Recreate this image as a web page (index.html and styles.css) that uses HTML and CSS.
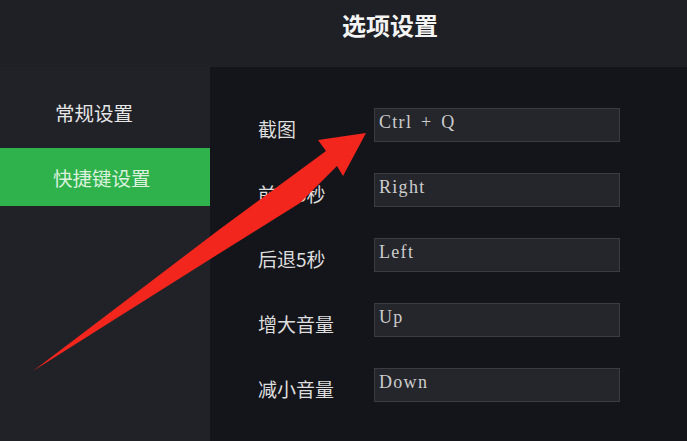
FILE: index.html
```html
<!DOCTYPE html>
<html lang="zh-CN">
<head>
<meta charset="utf-8">
<title>选项设置</title>
<link rel="stylesheet" href="styles.css">
</head>
<body>
<div class="app">
  <header class="header"><h1 class="title">选项设置</h1></header>
  <div class="main">
    <nav class="sidebar">
      <div class="nav-item">常规设置</div>
      <div class="nav-item active">快捷键设置</div>
    </nav>
    <section class="panel">
      <div class="row"><span class="label">截图</span><div class="field">Ctrl + Q</div></div>
      <div class="row"><span class="label">前进5秒</span><div class="field">Right</div></div>
      <div class="row"><span class="label">后退5秒</span><div class="field">Left</div></div>
      <div class="row"><span class="label">增大音量</span><div class="field">Up</div></div>
      <div class="row"><span class="label">减小音量</span><div class="field">Down</div></div>
    </section>
  </div>
  <svg class="arrow" viewBox="0 0 687 441" width="687" height="441" aria-hidden="true">
    <path d="M33,371 L120,305 L220,229 L326,151 L318,140 L366,133 L343,176 L337,166 L300,203 L220,253 L120,316 Z" fill="#f3261e"/>
  </svg>
</div>
</body>
</html>
```
FILE: styles.css
```css
html, body {
  margin: 0;
  padding: 0;
  background: #1f2025;
}
.app {
  position: relative;
  width: 687px;
  height: 441px;
  overflow: hidden;
  background: #1f2025;
  font-family: "Noto Sans CJK SC", "Noto Sans", sans-serif;
  display: flex;
  flex-direction: column;
}
.header {
  height: 67px;
  flex: none;
  box-sizing: border-box;
  padding: 10px 0 0 342px;
}
.title {
  margin: 0;
  font-size: 24px;
  line-height: 30px;
  font-weight: 700;
  color: #f4f4f4;
}
.main {
  flex: 1;
  display: flex;
}
.sidebar {
  width: 210px;
  flex: none;
  background: #212228;
  display: flex;
  flex-direction: column;
  gap: 7px;
  padding-top: 16px;
}
.nav-item {
  height: 58px;
  display: flex;
  align-items: center;
  padding-left: 55px;
  font-size: 19.5px;
  color: #e6e6e6;
}
.nav-item.active {
  background: #2fb24c;
  color: #dbf1de;
  padding-left: 53px;
}
.panel {
  flex: 1;
  background: #14151a;
  padding: 41px 0 0 48px;
  display: flex;
  flex-direction: column;
  gap: 31px;
}
.row {
  display: flex;
  align-items: center;
  height: 34px;
}
.label {
  width: 116px;
  flex: none;
  font-size: 19px;
  color: #dedede;
  padding-top: 6px;
}
.field {
  width: 246px;
  height: 34px;
  box-sizing: border-box;
  background: #25262c;
  border: 1px solid #3b3c43;
  padding: 0 0 5px 4px;
  display: flex;
  align-items: center;
  font-family: "Liberation Serif", "DejaVu Serif", serif;
  font-size: 18px;
  letter-spacing: 1.3px;
  word-spacing: 3px;
  white-space: pre;
  color: #cdcdcd;
}
.arrow {
  position: absolute;
  left: 0;
  top: 0;
  pointer-events: none;
}
```
